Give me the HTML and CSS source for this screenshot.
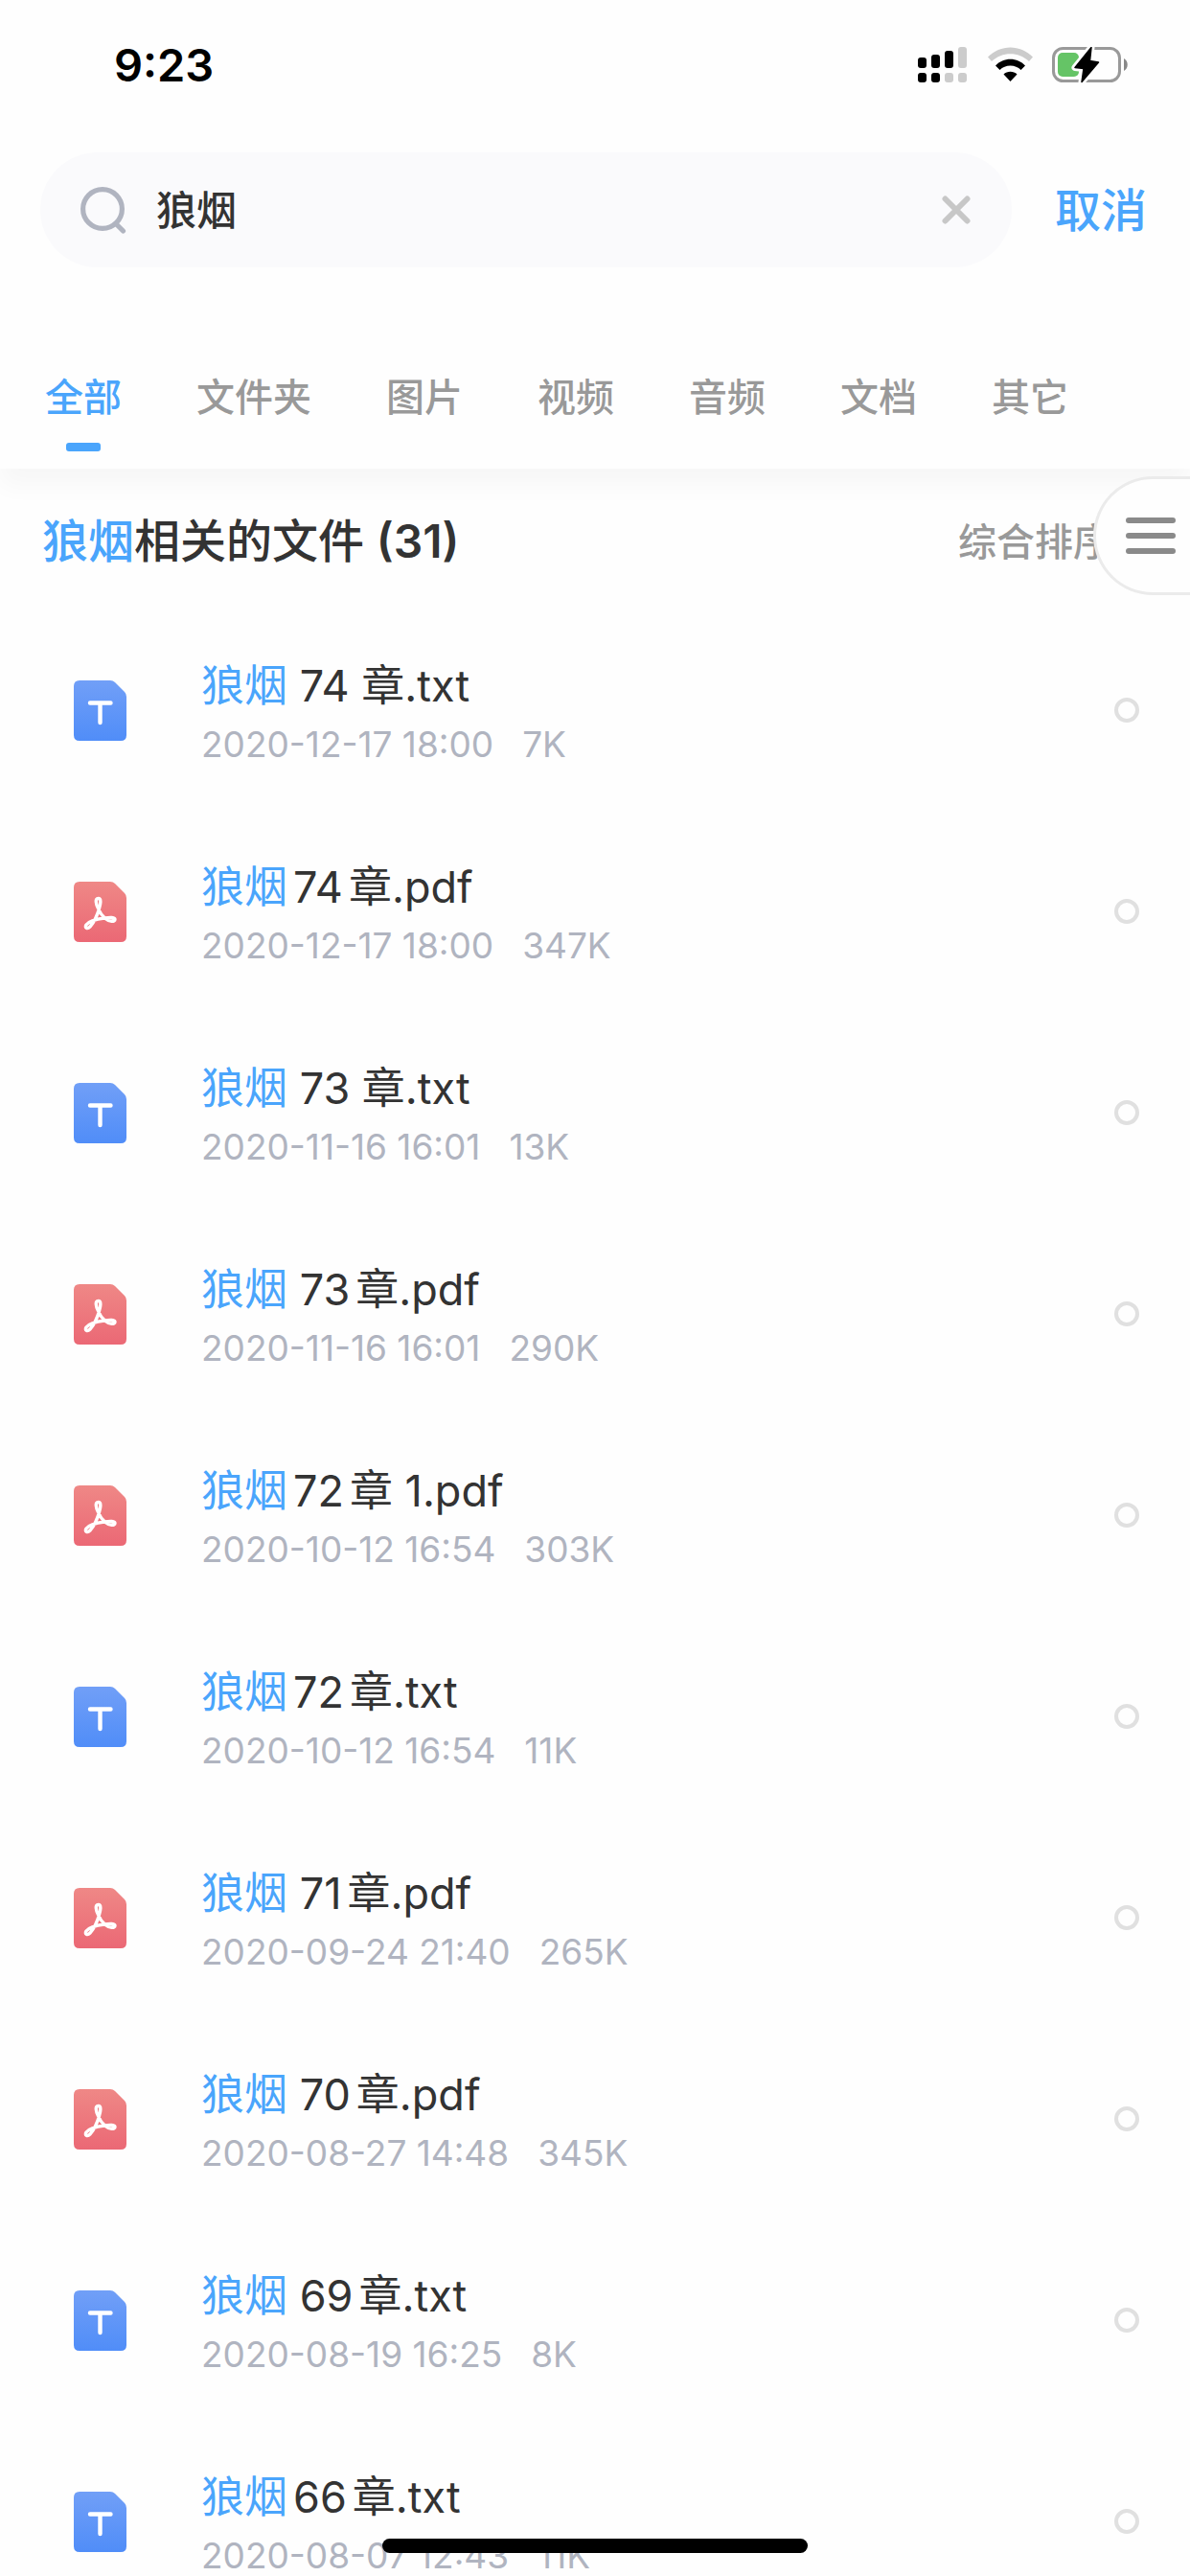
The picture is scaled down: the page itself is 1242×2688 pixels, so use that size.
FILE: index.html
```html
<!DOCTYPE html>
<html lang="zh-CN">
<head>
    <meta charset="utf-8">
    <meta name="viewport" content="width=device-width">
    <title>狼烟 - 搜索</title>
    <link rel="stylesheet" href="styles.css">
</head>
<body>
    <svg class="defs" width="0" height="0" aria-hidden="true">
        <defs>
            <linearGradient id="blue" x1="0" y1="0" x2="0" y2="1">
                <stop offset="0" stop-color="#719ff7"/>
                <stop offset="1" stop-color="#508df8"/>
            </linearGradient>
            <linearGradient id="red" x1="0" y1="0" x2="0" y2="1">
                <stop offset="0" stop-color="#ef8886"/>
                <stop offset="1" stop-color="#eb6875"/>
            </linearGradient>
        </defs>
        <symbol id="icon-txt" viewBox="0 0 55 63">
            <path fill="url(#blue)" d="M6 0H38Q41 0 43 2L53 12Q55 14 55 17V57Q55 63 49 63H6Q0 63 0 57V6Q0 0 6 0Z"/>
            <path fill="none" stroke="#fff" stroke-width="4.4" stroke-linecap="round" d="M17 23.5H38.500M27.500 24V44"/>
        </symbol>
        <symbol id="icon-pdf" viewBox="0 0 55 63">
            <path fill="url(#red)" d="M6 0H38Q41 0 43 2L53 12Q55 14 55 17V57Q55 63 49 63H6Q0 63 0 57V6Q0 0 6 0Z"/>
            <path fill="none" stroke="#fff" stroke-width="3.4" stroke-linejoin="round" d="M25.500 28C23 23 22 17.500 25.500 17.500C29 17.500 28 23 26.500 28C25 34 21 43 17 47C14 50 11 48 13 45C16 41 24 39 32 38C38 37 43 37 43 39.500C43 42 37 42 33 38.500C29 35 27 32 25.500 28Z"/>
        </symbol>
    </svg>

    <div class="app">
        <div class="status-bar">
            <span class="time">9:23</span>
            <svg width="220" height="38" viewBox="0 0 220 38" aria-hidden="true">
                <rect x="0" y="11" width="9" height="11" rx="3"/>
                <rect x="14" y="8" width="9" height="14" rx="3"/>
                <rect x="28" y="4" width="9" height="18" rx="3"/>
                <rect x="42" y="0" width="9" height="22" rx="3" fill="#ccc"/>
                <rect x="0" y="27" width="9" height="10" rx="3"/>
                <rect x="14" y="27" width="9" height="10" rx="3"/>
                <rect x="28" y="27" width="9" height="10" rx="3" fill="#ccc"/>
                <rect x="42" y="27" width="9" height="10" rx="3" fill="#ccc"/>
                <path fill="#ccc" d="M73 10.500C86 -3 107 -3 120 10.500L116 15C105 4.500 88 4.500 77 15Z"/>
                <path d="M81 19.500C89 10.500 104 10.500 112 19.500L107.500 24C102 18 91 18 85.500 24Z"/>
                <path d="M89.500 28.500C93 24.700 100 24.700 103.500 28.500L96.500 36Z"/>
                <rect x="141.500" y="1.500" width="69" height="34" rx="10" fill="none" stroke="#999" stroke-width="3"/>
                <path fill="#888" d="M215 12V25C220 22.500 220 14.500 215 12Z"/>
                <rect x="146" y="6" width="22" height="25" rx="5" fill="#65c466"/>
                <path stroke="#fefefe" stroke-width="7" stroke-linejoin="round" d="M181 0.500L164 21.500L173 22.500L171 36.500L188.500 16L179.500 14.500Z"/>
                <path stroke="#000" stroke-width="1.500" stroke-linejoin="round" d="M181 0.500L164 21.500L173 22.500L171 36.500L188.500 16L179.500 14.500Z"/>
            </svg>
        </div>

        <header class="header">
            <form class="search">
                <label class="search-box">
                    <svg width="50" height="50" viewBox="0 0 50 50" fill="none" stroke="#b0b4c0" stroke-width="5.200" stroke-linecap="round" aria-hidden="true">
                        <circle cx="24" cy="24" r="20.400"/>
                        <path d="M39 40.500L45.500 47"/>
                    </svg>
                    <input type="text" value="狼烟" aria-label="搜索">
                    <button type="reset" class="clear" aria-label="清除">
                        <svg width="30" height="30" viewBox="0 0 30 30" stroke="#c7c7c7" stroke-width="6" stroke-linecap="round">
                            <path d="M3.500 3.500L26.500 26.500M26.500 3.500L3.500 26.500"/>
                        </svg>
                    </button>
                </label>
                <button type="button" class="cancel">取消</button>
            </form>
            <nav class="tabs">
                <a href="#" class="active">全部</a>
                <a href="#">文件夹</a>
                <a href="#">图片</a>
                <a href="#">视频</a>
                <a href="#">音频</a>
                <a href="#">文档</a>
                <a href="#">其它</a>
            </nav>
        </header>

        <main class="results">
            <div class="results-head">
                <h1><em>狼烟</em>相关的文件 <b>(31)</b></h1>
                <button type="button" class="sort">综合排序</button>
                <button type="button" class="drawer" aria-label="菜单">
                    <svg width="52" height="38" viewBox="0 0 52 38" stroke="#8a8a8a" stroke-width="6" stroke-linecap="round">
                        <path d="M3 3H49M3 19H49M3 35H49"/>
                    </svg>
                </button>
            </div>
            <ul class="files">
                <li>
                    <svg class="file-icon"><use href="#icon-txt"/></svg>
                    <div class="info">
                        <div class="name"><em>狼烟</em> 74 章.txt</div>
                        <div class="meta"><span>2020-12-17 18:00</span><span>7K</span></div>
                    </div>
                    <input type="checkbox" aria-label="狼烟 74 章.txt">
                </li>
                <li>
                    <svg class="file-icon"><use href="#icon-pdf"/></svg>
                    <div class="info">
                        <div class="name"><em class="tight">狼烟</em><span class="tight">74</span>章.pdf</div>
                        <div class="meta"><span>2020-12-17 18:00</span><span>347K</span></div>
                    </div>
                    <input type="checkbox" aria-label="狼烟74章.pdf">
                </li>
                <li>
                    <svg class="file-icon"><use href="#icon-txt"/></svg>
                    <div class="info">
                        <div class="name"><em>狼烟</em> 73 章.txt</div>
                        <div class="meta"><span>2020-11-16 16:01</span><span>13K</span></div>
                    </div>
                    <input type="checkbox" aria-label="狼烟 73 章.txt">
                </li>
                <li>
                    <svg class="file-icon"><use href="#icon-pdf"/></svg>
                    <div class="info">
                        <div class="name"><em>狼烟</em> <span class="tight">73</span>章.pdf</div>
                        <div class="meta"><span>2020-11-16 16:01</span><span>290K</span></div>
                    </div>
                    <input type="checkbox" aria-label="狼烟 73章.pdf">
                </li>
                <li>
                    <svg class="file-icon"><use href="#icon-pdf"/></svg>
                    <div class="info">
                        <div class="name"><em class="tight">狼烟</em><span class="tight">72</span>章 1.pdf</div>
                        <div class="meta"><span>2020-10-12 16:54</span><span>303K</span></div>
                    </div>
                    <input type="checkbox" aria-label="狼烟72章 1.pdf">
                </li>
                <li>
                    <svg class="file-icon"><use href="#icon-txt"/></svg>
                    <div class="info">
                        <div class="name"><em class="tight">狼烟</em><span class="tight">72</span>章.txt</div>
                        <div class="meta"><span>2020-10-12 16:54</span><span>11K</span></div>
                    </div>
                    <input type="checkbox" aria-label="狼烟72章.txt">
                </li>
                <li>
                    <svg class="file-icon"><use href="#icon-pdf"/></svg>
                    <div class="info">
                        <div class="name"><em>狼烟</em> <span class="tight">71</span>章.pdf</div>
                        <div class="meta"><span>2020-09-24 21:40</span><span>265K</span></div>
                    </div>
                    <input type="checkbox" aria-label="狼烟 71章.pdf">
                </li>
                <li>
                    <svg class="file-icon"><use href="#icon-pdf"/></svg>
                    <div class="info">
                        <div class="name"><em>狼烟</em> <span class="tight">70</span>章.pdf</div>
                        <div class="meta"><span>2020-08-27 14:48</span><span>345K</span></div>
                    </div>
                    <input type="checkbox" aria-label="狼烟 70章.pdf">
                </li>
                <li>
                    <svg class="file-icon"><use href="#icon-txt"/></svg>
                    <div class="info">
                        <div class="name"><em>狼烟</em> <span class="tight">69</span>章.txt</div>
                        <div class="meta"><span>2020-08-19 16:25</span><span>8K</span></div>
                    </div>
                    <input type="checkbox" aria-label="狼烟 69章.txt">
                </li>
                <li>
                    <svg class="file-icon"><use href="#icon-txt"/></svg>
                    <div class="info">
                        <div class="name"><em class="tight">狼烟</em><span class="tight">66</span>章.txt</div>
                        <div class="meta"><span>2020-08-07 12:43</span><span>11K</span></div>
                    </div>
                    <input type="checkbox" aria-label="狼烟66章.txt">
                </li>
            </ul>
        </main>
        <div class="home-bar"></div>
    </div>
</body>
</html>
```
FILE: styles.css
```css
* { box-sizing: border-box; }
body { margin: 0; background: #fefefe; color: #333; font-family: Inter, "Noto Sans CJK SC", sans-serif; }
button { border: 0; padding: 0; background: none; font: inherit; }
em { font-style: normal; color: #4aa5fc; }
svg { display: block; flex: none; }
.defs { position: absolute; }

.app { height: 100vh; display: flex; flex-direction: column; overflow: hidden; }

.status-bar { height: 136px; padding: 0 64px 0 119px; display: flex; justify-content: space-between; align-items: center; flex: none; }
.time { padding-bottom: 2px; font-size: 47px; font-weight: 600; color: #000; }

.header { flex: none; padding: 23px 45px 18px 47px; background: #fefefe; box-shadow: 0 18px 24px rgba(0, 0, 0, 0.03); }
.search { display: flex; align-items: center; gap: 45px; margin-left: -5px; }
.search-box { flex: 1; min-width: 0; height: 120px; padding: 0 43px 0 41px; border-radius: 60px; background: #fafafc; display: flex; align-items: center; }
.search-box input { flex: 1; min-width: 0; margin-left: 30px; padding: 0 0 6px; border: 0; outline: 0; background: none; font: inherit; font-size: 42px; font-weight: 500; color: #333; }
.cancel { padding-bottom: 6px; font-size: 48px; font-weight: 500; color: #4aa5fc; }

.tabs { display: flex; gap: 78px; margin-top: 106px; }
.tabs a { display: flex; flex-direction: column; align-items: center; gap: 17px; font-size: 40px; line-height: 60px; font-weight: 500; color: #999; text-decoration: none; white-space: nowrap; }
.tabs a.active { color: #4aa5fc; }
.tabs a::after { content: ""; width: 36px; height: 9px; border-radius: 3px; }
.tabs a.active::after { background: #4aa5fc; }

.results { flex: 1; min-height: 0; overflow: hidden; }
.results-head { position: relative; height: 147px; padding: 0 82px 0 44px; display: flex; align-items: center; justify-content: space-between; }
.results-head h1 { margin: 0; padding-bottom: 4px; font-size: 48px; font-weight: 500; }
.results-head b { font-weight: 600; }
.sort { font-size: 40px; font-weight: 500; color: #999; }
.drawer { position: absolute; right: 0; top: 8px; width: 101px; height: 124px; padding-left: 31px; border: 3px solid #ebebeb; border-right: 0; border-radius: 62px 0 0 62px; background: #fefefe; }

.files { list-style: none; margin: 0; padding: 0 53px 0 77px; }
.files li { display: flex; align-items: center; height: 210px; }
.file-icon { width: 55px; height: 63px; }
.info { flex: 1; min-width: 0; margin-left: 78px; padding-top: 6px; }
.name { font-size: 45px; line-height: 66px; }
.tight { margin-right: 6px; }
.meta { display: flex; gap: 30px; font-size: 37px; line-height: 56px; color: #b0b4c0; }
.files input { appearance: none; width: 26px; height: 26px; margin: 0; border: 4px solid #e0e0e0; border-radius: 50%; }

.home-bar { position: fixed; left: 50%; bottom: 24px; width: 444px; height: 15px; margin-left: -222px; border-radius: 8px; background: #000; }
```
